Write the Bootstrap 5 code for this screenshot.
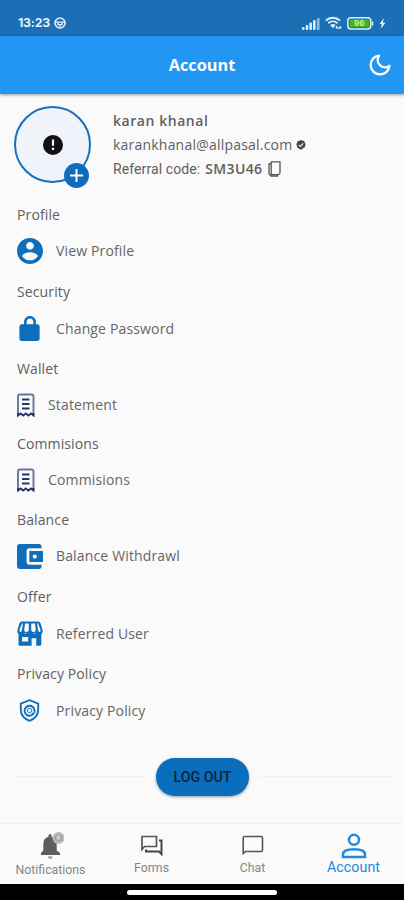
<!DOCTYPE html>
<html lang="en">
<head>
<meta charset="utf-8">
<meta name="viewport" content="width=device-width, initial-scale=1">
<title>Account</title>
<link rel="stylesheet" href="https://cdn.jsdelivr.net/npm/bootstrap@5.3.0/dist/css/bootstrap.min.css">
<style>
body{font-family:"Open Sans","Noto Sans",sans-serif;background:#fafafa;color:#606060;font-size:14px;line-height:1}
svg{display:block;flex:none}
.screen{height:900px;overflow:hidden}
.status{height:36px;background:#1a6fb5;padding:10px 18px 0 18px;color:#e4f1fb}
.clock{font:700 12.3px/1 Inter,sans-serif;letter-spacing:-.2px}
.sys{gap:5px}
.appbar{height:58px;background:#2196f3;box-shadow:0 1px 3px rgba(0,0,0,.4);z-index:1}
.appbar h1{font-size:16.3px;font-weight:700;line-height:1}
.appbar .moon{right:13px;top:18px}
.profile{height:106px;padding:12px 0 0 14px}
.avatar{width:77px;height:77px;border:2px solid #1770bd;background:#f0f3fa}
.plus{right:0;bottom:-7px;width:25px;height:25px;background:#0f6dbb}
.info{margin-left:22px;padding-top:3px}
.info>div{height:24px;white-space:nowrap}
.who{font-weight:600;letter-spacing:.55px}
.mail{letter-spacing:.21px}
.refer{font-family:Roboto,sans-serif}
.refer>span:first-child{letter-spacing:.1px}
.code{font:600 14px/1 "Open Sans",sans-serif;margin-left:5px;letter-spacing:.35px}
.copy{margin-left:6px}
.group{height:77.3px;padding-left:17px}
.group.short{height:75.2px}
.group h2{font-size:14px;font-weight:400;height:30px;margin:0;letter-spacing:.12px}
.entry{height:42.6px;gap:13px;color:#0f6dbb}
.short .entry{height:41px;color:#26346f}
.entry span{color:#666;letter-spacing:.15px}
.logout{margin-top:21px;height:38px;padding-left:17px;padding-right:11px}
.rule{height:1px;background:#f0f0f0}
.rule-start{width:129px}
.btn-out{width:93px;height:38px;margin:0 10px;background:#0b6ebd;color:#0b2238;font:500 14.2px/1 Roboto,sans-serif;box-shadow:0 1px 3px rgba(0,0,0,.4)}
.tabs{height:61px;border-top:1px solid #f0f0f0;font-family:Roboto,sans-serif;font-size:12.3px;color:#858585}
.tabs .tab{width:101px;height:60px;padding-top:11px;gap:5px}
.tabs .tab-bell{padding-top:7px;gap:4px}
.tabs .tab-on{padding-top:9px;gap:1px;color:#2289e0;font-size:14.2px;letter-spacing:.1px}
.gesture{height:16px;background:#000}
.gesture div{width:150px;height:5px;background:#fff}
</style>
</head>
<body>
<div class="screen d-flex flex-column">
  <div class="status d-flex justify-content-between">
    <div class="d-flex align-items-center">
      <span class="clock">13:23</span>
      <svg class="ms-1" width="12" height="12" viewBox="0 0 12 12" fill="none" stroke="#e4f1fb" stroke-width="1.6"><circle cx="6" cy="6" r="5"/><path d="M1.2 5.2h9.600M4 5.500v2.200h4V5.500M6 8v3" stroke-width="1.300"/></svg>
    </div>
    <div class="sys d-flex align-items-center">
      <svg width="18" height="13" viewBox="0 0 18 13"><g fill="#e4f1fb"><rect y="10" width="2.500" height="3" rx="1"/><rect x="3.700" y="8" width="2.500" height="5" rx="1"/><rect x="7.400" y="5.500" width="2.500" height="7.500" rx="1"/><rect x="11" y="3" width="2.500" height="10" rx="1"/></g><rect x="14.800" y="1" width="2.800" height="12" rx="1" fill="#8fbade"/></svg>
      <svg width="17" height="14" viewBox="0 0 17 14" fill="none" stroke="#e4f1fb" stroke-width="1.900"><path d="M.8 4.600c4-3.800 10.200-3.800 14.200 0M3.300 7.200c2.700-2.500 6.600-2.500 9.200 0"/><path d="M5.200 9.100c1.600-1.500 3.800-1.500 5.400 0L8 12.200z" fill="#e4f1fb" stroke="none"/><path d="M11.500 12.200h4.500M12 9.900l-1 2.300M15 9.900l1 2.300" stroke-width="1.300"/></svg>
      <svg width="27" height="13" viewBox="0 0 27 13"><rect x=".8" y=".8" width="23" height="11.200" rx="3.200" fill="#1a6fb5" stroke="#dcecf7" stroke-width="1.500"/><rect x="2.500" y="2.500" width="19.600" height="7.800" rx="1.500" fill="#43b31f"/><path d="M25.500 4.500v4" stroke="#dcecf7" stroke-width="1.500"/><text x="12.300" y="9.400" text-anchor="middle" font-family="Inter" font-weight="700" font-size="8" fill="#c9efb4">96</text></svg>
      <svg width="7" height="11" viewBox="0 0 8 12"><path d="M5.500 0L.5 6.500h2.700L2 12l5.500-7H4.500z" fill="#e4f1fb"/></svg>
    </div>
  </div>

  <header class="appbar position-relative d-flex align-items-center justify-content-center text-white">
    <h1 class="m-0">Account</h1>
    <svg class="moon position-absolute" width="22" height="22" viewBox="1.500 1.500 21 21" fill="none" stroke="#fff" stroke-width="2.200" stroke-linejoin="round"><path d="M21 12.790A9 9 0 1 1 11.210 3 7 7 0 0 0 21 12.790z"/></svg>
  </header>

  <section class="profile d-flex">
    <div class="avatar position-relative rounded-circle d-flex align-items-center justify-content-center">
      <svg width="20" height="20" viewBox="2 2 20 20"><path fill="#111" d="M12 2a10 10 0 1 0 0 20 10 10 0 0 0 0-20zm1.100 15h-2.200v-2.200h2.200zm0-4.200h-2.200V6.500h2.200z"/></svg>
      <div class="plus position-absolute rounded-circle d-flex align-items-center justify-content-center">
        <svg width="13" height="13" viewBox="0 0 13 13" stroke="#fff" stroke-width="2"><path d="M6.500 0v13M0 6.500h13"/></svg>
      </div>
    </div>
    <div class="info">
      <div class="who d-flex align-items-center">karan khanal</div>
      <div class="mail d-flex align-items-center">karankhanal@allpasal.com
        <svg class="ms-1" width="10" height="10" viewBox="0 0 10 10"><path fill="#444" d="M5 0l1.400.7 1.700.1.500 1.700L9.700 4l-.5 1.600-.3 1.700-1.600.7L5 10l-2-1.500-1.700-.8L1 5.900.3 4.200l.8-1.500L1.700.9 3.500.7z"/><path d="M2.800 4.900l1.600 1.500 2.900-3" fill="none" stroke="#fafafa" stroke-width="1.100"/></svg>
      </div>
      <div class="refer d-flex align-items-center"><span>Referral code:</span><span class="code">SM3U46</span>
        <svg class="copy" width="13" height="16" viewBox="0 0 13 16" fill="none" stroke="#555" stroke-width="1.300"><path d="M3.200.9h8.800v11.200l-1.500 1.500H3.200z"/><path d="M3 3H1v10l2 2h6.500v-1.500"/></svg>
      </div>
    </div>
  </section>

  <main>
    <section class="group">
      <h2 class="d-flex align-items-center">Profile</h2>
      <div class="entry d-flex align-items-center">
        <svg width="26" height="26" viewBox="2 2 20 20" fill="currentColor"><path d="M12 2C6.480 2 2 6.480 2 12s4.480 10 10 10 10-4.480 10-10S17.520 2 12 2zm0 3c1.660 0 3 1.340 3 3s-1.340 3-3 3-3-1.340-3-3 1.340-3 3-3zm0 14.200c-2.500 0-4.710-1.280-6-3.220.03-1.990 4-3.080 6-3.080 1.990 0 5.970 1.090 6 3.080-1.290 1.940-3.500 3.220-6 3.220z"/></svg>
        <span>View Profile</span>
      </div>
    </section>
    <section class="group">
      <h2 class="d-flex align-items-center">Security</h2>
      <div class="entry d-flex align-items-center">
        <svg width="26" height="25" viewBox="1.500 1 21 21" fill="currentColor"><path d="M18.200 8H17V6c0-2.760-2.240-5-5-5S7 3.240 7 6v2H5c-1.100 0-1.900.9-1.900 2v10c0 1.100.8 2 1.900 2h13.200c1.100 0 1.900-.9 1.900-2V10c0-1.100-.8-2-1.900-2zM9.200 8V6c0-1.600 1.200-2.800 2.800-2.800s2.800 1.200 2.800 2.800v2z"/></svg>
        <span>Change Password</span>
      </div>
    </section>
    <section class="group short">
      <h2 class="d-flex align-items-center">Wallet</h2>
      <div class="entry d-flex align-items-center">
        <svg width="18" height="24" viewBox="0 0 18 24" fill="none" stroke="currentColor" stroke-width="1.900"><path d="M1 22V3.500Q1 1.500 3 1.500h11.500q2 0 2 2V22" stroke="#69739d"/><path d="M1 20v2.500l2.600-2L6.200 22.500l2.600-2 2.600 2 2.600-2 2.500 2V20"/><path d="M5 6.500h7.500M5 11h7.500M5 15.500h7.500"/></svg>
        <span>Statement</span>
      </div>
    </section>
    <section class="group short">
      <h2 class="d-flex align-items-center">Commisions</h2>
      <div class="entry d-flex align-items-center">
        <svg width="18" height="24" viewBox="0 0 18 24" fill="none" stroke="currentColor" stroke-width="1.900"><path d="M1 22V3.500Q1 1.500 3 1.500h11.500q2 0 2 2V22" stroke="#69739d"/><path d="M1 20v2.500l2.600-2L6.200 22.500l2.600-2 2.600 2 2.600-2 2.500 2V20"/><path d="M5 6.500h7.500M5 11h7.500M5 15.500h7.500"/></svg>
        <span>Commisions</span>
      </div>
    </section>
    <section class="group">
      <h2 class="d-flex align-items-center">Balance</h2>
      <div class="entry d-flex align-items-center">
        <svg width="26" height="25" viewBox="3 3 19 18" preserveAspectRatio="none" fill="currentColor"><path d="M21 18v1c0 1.100-.9 2-2 2H5c-1.110 0-2-.9-2-2V5c0-1.100.89-2 2-2h14c1.100 0 2 .9 2 2v1h-9c-1.110 0-2 .9-2 2v8c0 1.100.89 2 2 2zm-9-2h10V8H12zm4-2.500c-.83 0-1.500-.67-1.500-1.500s.67-1.500 1.500-1.500 1.500.67 1.500 1.500-.67 1.500-1.500 1.500z"/></svg>
        <span>Balance Withdrawl</span>
      </div>
    </section>
    <section class="group">
      <h2 class="d-flex align-items-center">Offer</h2>
      <div class="entry d-flex align-items-center">
        <svg width="26" height="25" viewBox="0 0 26 25" fill="currentColor"><path fill-rule="evenodd" d="M1.500 12.500h22.800v11a1.300 1.300 0 0 1-1.300 1.300h-3.800v-7.600h-4.600v7.600H2.800a1.300 1.300 0 0 1-1.300-1.300zM5 16v4.500h6.200V16z"/><path d="M5 .5h16q2 0 2.600 2L25.600 9q.5 4.800-3.600 4.800-2.500 0-4.500-2-2 2-4.500 2t-4.500-2q-2 2-4.500 2Q-.1 13.800.4 9L2.400 2.500Q3 .5 5 .5z"/><path fill="#fafafa" d="M8 2.600h3.800v6.200q0 2.200-2.400 2.200T7.200 8.800zM14.200 2.600H18l.8 6.200q0 2.200-2.200 2.200t-2.400-2.200z"/><path fill="#fafafa" d="M4.900 2.600h1L4.900 9q-.3 2.200-1.600 2t-.8-2.200zM21.100 2.600h-1l1 6.400q.3 2.200 1.600 2t.8-2.200z"/></svg>
        <span>Referred User</span>
      </div>
    </section>
    <section class="group">
      <h2 class="d-flex align-items-center">Privacy Policy</h2>
      <div class="entry d-flex align-items-center">
        <svg width="26" height="23" viewBox="0 0 26 23" fill="none" stroke="currentColor" stroke-width="1.900"><path d="M12.500 1.200L21.200 4.700v6.100q0 7.700-8.700 11-8.700-3.300-8.700-11V4.700z"/><path d="M16.300 15a5 5 0 1 1 1.200-3.500v2.700M14.800 14.200l2.200 1.300"/><circle cx="12.500" cy="11.500" r="2.200" stroke-width="1"/></svg>
        <span>Privacy Policy</span>
      </div>
    </section>
  </main>

  <div class="logout d-flex align-items-center">
    <div class="rule rule-start"></div>
    <button class="btn btn-out rounded-pill border-0 p-0">LOG OUT</button>
    <div class="rule flex-fill"></div>
  </div>

  <nav class="tabs d-flex mt-auto">
    <div class="tab tab-bell d-flex flex-column align-items-center">
      <svg width="26" height="29" viewBox="0 0 26 29"><path fill="#5d5d5d" d="M3 24v-2l2.300-2.500V13q0-6 5.200-7.300V4.500q0-1.500 1.500-1.500t1.500 1.500v1.200q5.200 1.300 5.200 7.300v6.500L22 22v2z"/><path fill="#888" d="M10 25.500h4.500q-.3 2.300-2.200 2.300T10 25.500z"/><circle cx="20.500" cy="7" r="6" fill="#bbb"/><circle cx="20.500" cy="7" r="3.200" fill="none" stroke="#999"/><path d="M20.500 5v2.500" stroke="#eee" stroke-width="1.200"/></svg>
      <span>Notifications</span>
    </div>
    <div class="tab d-flex flex-column align-items-center">
      <svg width="22" height="22" viewBox="0 0 22 22" fill="none" stroke="#555" stroke-width="1.700"><path d="M1 14.500V1.500h14.500v10H3.500z"/><path stroke="#444" stroke-width="2" d="M18 5.500h2.500v13.500l-2.500-2.500H5v-2"/></svg>
      <span>Forms</span>
    </div>
    <div class="tab d-flex flex-column align-items-center">
      <svg width="22" height="22" viewBox="0 0 22 22" fill="none" stroke="#555" stroke-width="1.600"><path d="M1.200 18.500V3Q1.200 1.500 2.700 1.500H19Q20.500 1.500 20.500 3v12q0 1.500-1.500 1.500H3.500z"/></svg>
      <span>Chat</span>
    </div>
    <div class="tab tab-on d-flex flex-column align-items-center">
      <svg width="26" height="26" viewBox="0 0 26 26" fill="none" stroke="currentColor" stroke-width="2.500"><circle cx="13" cy="6.800" r="5"/><path d="M2 24v-2.500q0-5.200 11-5.200t11 5.200V24z"/></svg>
      <span>Account</span>
    </div>
  </nav>
  <div class="gesture d-flex align-items-center justify-content-center"><div class="rounded-pill"></div></div>
</div>
<script src="https://cdn.jsdelivr.net/npm/bootstrap@5.3.0/dist/js/bootstrap.bundle.min.js"></script>
</body>
</html>
